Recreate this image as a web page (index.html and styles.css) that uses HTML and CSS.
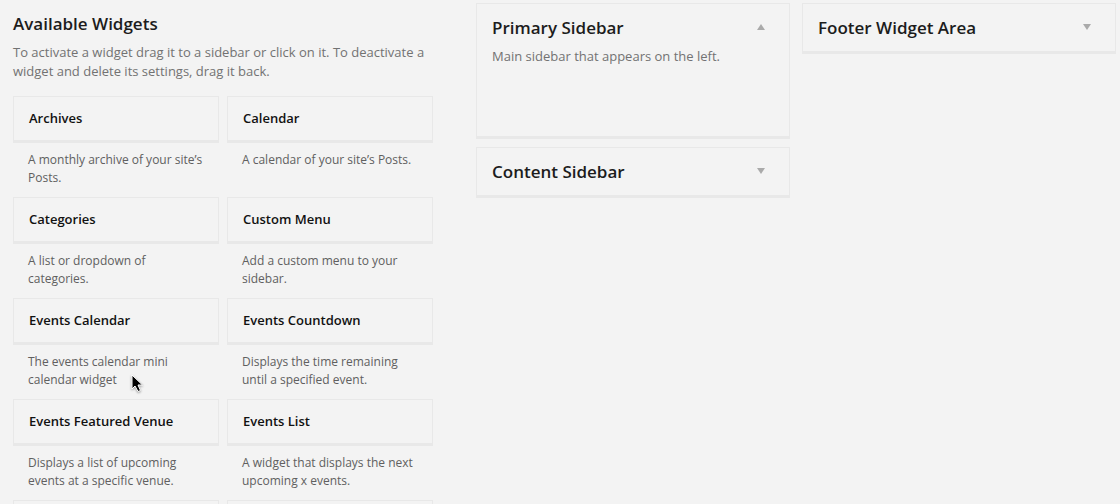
FILE: index.html
```html
<!DOCTYPE html>
<html lang="en">

<head>
    <meta charset="UTF-8">
    <meta name="viewport" content="width=device-width, initial-scale=1.0">
    <title>Widgets</title>
    <link rel="stylesheet" href="styles.css">
</head>

<body>
    <main class="page">
        <section class="available">
            <h2 class="heading">Available Widgets</h2>
            <p class="intro">To activate a widget drag it to a sidebar or click on it. To deactivate a widget and delete its settings, drag it back.</p>
            <div class="widget-list">
                <div class="widget">
                    <h4 class="widget-title">Archives</h4>
                    <p class="widget-desc">A monthly archive of your site’s Posts.</p>
                </div>
                <div class="widget">
                    <h4 class="widget-title">Calendar</h4>
                    <p class="widget-desc">A calendar of your site’s Posts.</p>
                </div>
                <div class="widget">
                    <h4 class="widget-title">Categories</h4>
                    <p class="widget-desc">A list or dropdown of categories.</p>
                </div>
                <div class="widget">
                    <h4 class="widget-title">Custom Menu</h4>
                    <p class="widget-desc">Add a custom menu to your sidebar.</p>
                </div>
                <div class="widget">
                    <h4 class="widget-title">Events Calendar</h4>
                    <p class="widget-desc">The events calendar mini calendar widget</p>
                </div>
                <div class="widget">
                    <h4 class="widget-title">Events Countdown</h4>
                    <p class="widget-desc">Displays the time remaining until a specified event.</p>
                </div>
                <div class="widget">
                    <h4 class="widget-title">Events Featured Venue</h4>
                    <p class="widget-desc">Displays a list of upcoming events at a specific venue.</p>
                </div>
                <div class="widget">
                    <h4 class="widget-title">Events List</h4>
                    <p class="widget-desc">A widget that displays the next upcoming x events.</p>
                </div>
                <div class="widget">
                    <div class="widget-title"></div>
                </div>
                <div class="widget">
                    <div class="widget-title"></div>
                </div>
            </div>
        </section>

        <section class="sidebars">
            <div class="sidebar-column">
                <div class="sidebar open">
                    <div class="sidebar-name">
                        <h3 class="heading">Primary Sidebar</h3>
                        <button class="toggle" type="button" aria-label="Close Primary Sidebar" aria-expanded="true">
                            <svg width="8" height="6" viewBox="0 0 8 6"><path d="M4 0L8 6H0z" /></svg>
                        </button>
                    </div>
                    <p class="sidebar-desc">Main sidebar that appears on the left.</p>
                </div>
                <div class="sidebar">
                    <div class="sidebar-name">
                        <h3 class="heading">Content Sidebar</h3>
                        <button class="toggle" type="button" aria-label="Open Content Sidebar" aria-expanded="false">
                            <svg width="8" height="6" viewBox="0 0 8 6"><path d="M0 0H8L4 6z" /></svg>
                        </button>
                    </div>
                </div>
            </div>
            <div class="sidebar-column">
                <div class="sidebar">
                    <div class="sidebar-name">
                        <h3 class="heading">Footer Widget Area</h3>
                        <button class="toggle" type="button" aria-label="Open Footer Widget Area" aria-expanded="false">
                            <svg width="8" height="6" viewBox="0 0 8 6"><path d="M0 0H8L4 6z" /></svg>
                        </button>
                    </div>
                </div>
            </div>
        </section>
    </main>

    <!-- mouse pointer -->
    <svg class="pointer" width="13" height="19" viewBox="0 0 13 19">
        <path d="M1 1V15L4 12L7 17.500L9.500 16.500L7 11H11.500z" />
    </svg>
</body>

</html>
```

FILE: styles.css
```css
*{
    box-sizing: border-box;
}
body{
    margin: 0;
    height: 100vh;
    overflow: hidden;
    background-color: #f3f3f3;
    color: #1c1c1c;
    font-family: "Open Sans", sans-serif;
    font-size: 13px;
}
h2, h3, h4, p{
    margin: 0;
}
.page{
    display: flex;
    align-items: flex-start;
    gap: 43px;
    height: 100%;
    overflow: hidden;
    padding: 3px 4px 0 13px;
}
.heading{
    font-size: 17px;
    font-weight: 600;
    line-height: 24px;
}
.available{
    flex: 420 1 0;
    padding-top: 9px;
}
.intro{
    color: #727272;
    line-height: 19px;
    margin: 7px 0 15px 0;
}
.widget-list{
    display: grid;
    grid-template-columns: 1fr 1fr;
    column-gap: 8px;
    row-gap: 10px;
}
.widget-title{
    height: 47px;
    padding: 12px 15px;
    border: 1px solid #e8e8e8;
    border-bottom-width: 3px;
    color: #111;
    font-size: 13px;
    font-weight: 600;
    line-height: 18px;
}
.widget-desc{
    padding: 8px 14px 0 15px;
    color: #606060;
    font-size: 12px;
    line-height: 18px;
}
.sidebars{
    flex: 640 1 0;
    display: grid;
    grid-template-columns: 1fr 1fr;
    gap: 12px;
    align-items: start;
}
.sidebar-column{
    display: flex;
    flex-direction: column;
    gap: 8px;
}
.sidebar{
    padding: 12px 15px 11px 15px;
    border: 1px solid #e8e8e8;
    border-bottom-width: 3px;
}
.open{
    min-height: 136px;
}
.sidebar-name{
    display: flex;
    justify-content: space-between;
    align-items: flex-start;
}
.sidebar-desc{
    color: #727272;
    line-height: 19px;
    padding-top: 7px;
}
.toggle{
    display: flex;
    padding: 8px 9px;
    border: none;
    background: none;
    fill: #aaa;
    cursor: pointer;
}
.pointer{
    position: absolute;
    left: 131px;
    top: 374px;
    fill: #000;
    stroke: #fff;
    stroke-width: 1px;
    filter: drop-shadow(0 1px 1px #999);
}
```
